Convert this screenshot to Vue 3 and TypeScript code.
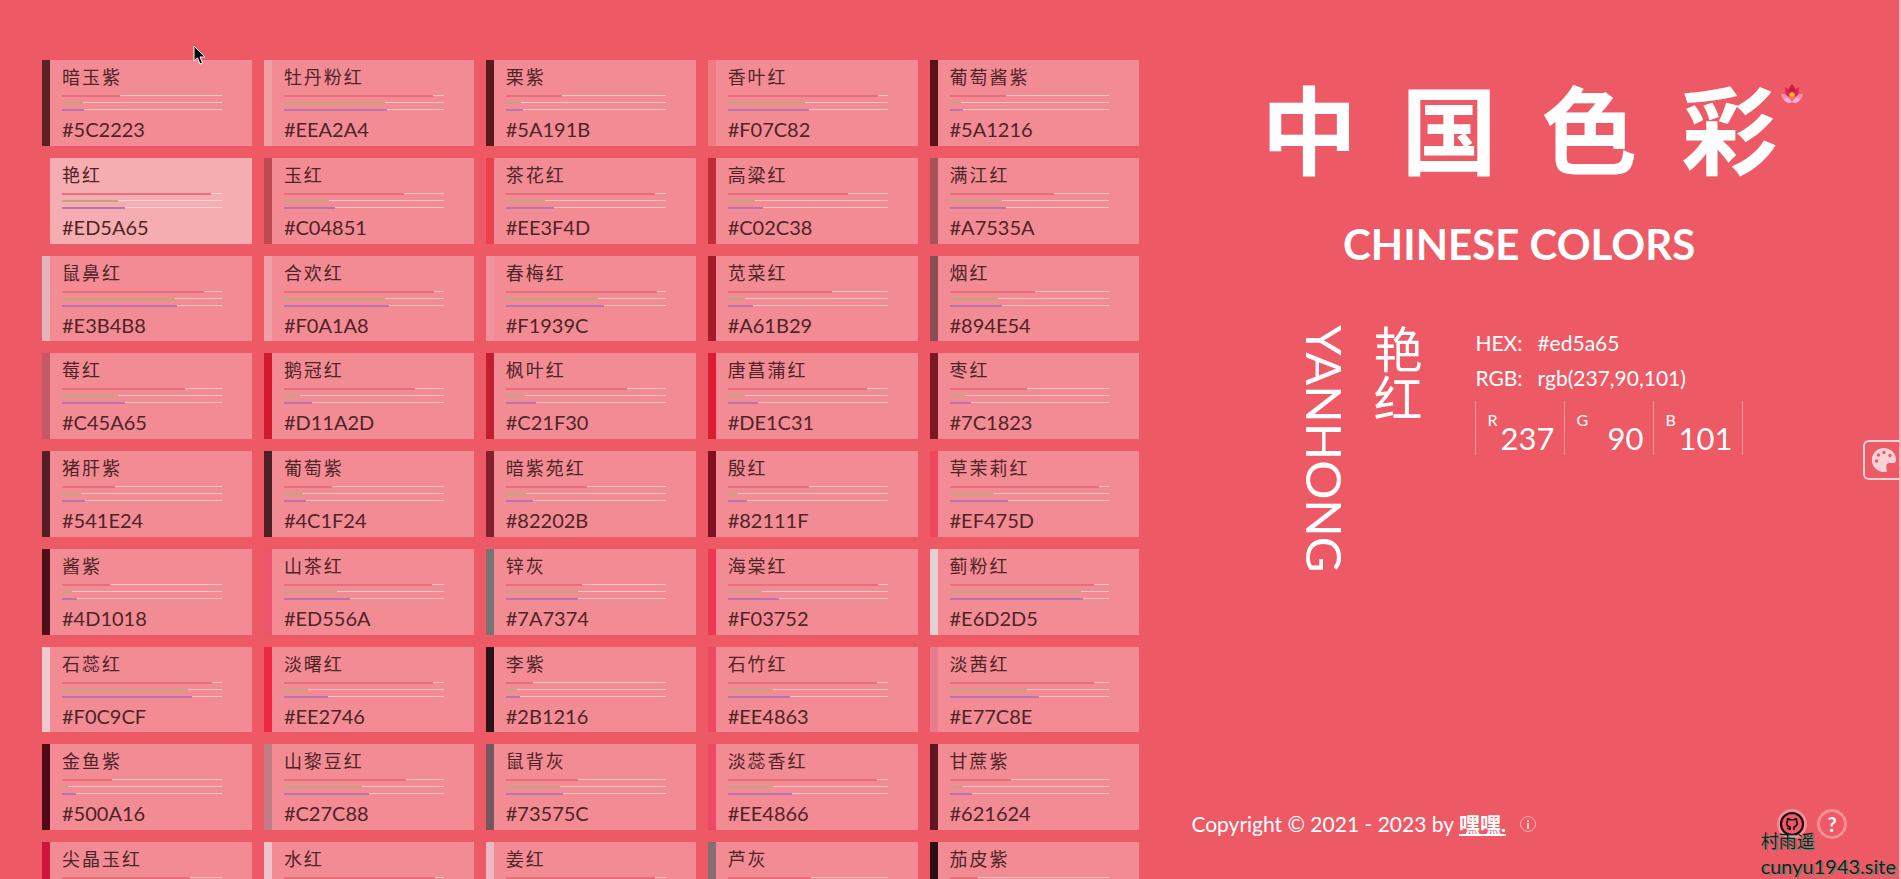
<script setup lang="ts">
interface Swatch {
  name: string
  hex: string
}

const palette = `暗玉紫 5C2223,牡丹粉红 EEA2A4,栗紫 5A191B,香叶红 F07C82,葡萄酱紫 5A1216
艳红 ED5A65,玉红 C04851,茶花红 EE3F4D,高粱红 C02C38,满江红 A7535A
鼠鼻红 E3B4B8,合欢红 F0A1A8,春梅红 F1939C,苋菜红 A61B29,烟红 894E54
莓红 C45A65,鹅冠红 D11A2D,枫叶红 C21F30,唐菖蒲红 DE1C31,枣红 7C1823
猪肝紫 541E24,葡萄紫 4C1F24,暗紫苑红 82202B,殷红 82111F,草茉莉红 EF475D
酱紫 4D1018,山茶红 ED556A,锌灰 7A7374,海棠红 F03752,蓟粉红 E6D2D5
石蕊红 F0C9CF,淡曙红 EE2746,李紫 2B1216,石竹红 EE4863,淡茜红 E77C8E
金鱼紫 500A16,山黎豆红 C27C88,鼠背灰 73575C,淡蕊香红 EE4866,甘蔗紫 621624
尖晶玉红 CC163A,水红 F1C4CD,姜红 EEB8C3,芦灰 856D72,茄皮紫 2D0C13`

const swatches: Swatch[] = palette
  .split(/[,\n]/)
  .map((entry) => {
    const [name, hex] = entry.trim().split(' ')
    return { name, hex }
  })

const channels = (hex: string): number[] => [0, 2, 4].map((i) => parseInt(hex.slice(i, i + 2), 16))
const share = (value: number): string => `${(value / 255) * 100}%`

const current = { name: '艳红', pinyin: 'YANHONG', hex: '#ed5a65' }
const rgb = channels(current.hex.slice(1))
const labels = ['R', 'G', 'B']
</script>

<template>
  <div class="page">
    <main class="scroller">
      <div class="list">
        <button
          v-for="s in swatches"
          :key="s.hex"
          type="button"
          class="card"
          :class="{ active: s.name === current.name }"
          :style="{ borderLeftColor: '#' + s.hex }"
        >
          <span class="name">{{ s.name }}</span>
          <span class="bars">
            <span v-for="(v, i) in channels(s.hex)" :key="i" class="track">
              <span class="fill" :class="labels[i]" :style="{ width: share(v) }"></span>
            </span>
          </span>
          <span class="hex">#{{ s.hex }}</span>
        </button>
      </div>
    </main>

    <aside class="side">
      <h1 class="title">
        <span v-for="c in '中国色彩'" :key="c">{{ c }}</span>
        <svg class="lotus" viewBox="0 0 22 20" aria-hidden="true">
          <path d="M0 10c5-1 9 3 11 8C5 20 1 16 0 10z" fill="#f48bb0" />
          <path d="M22 10c-5-1-9 3-11 8 6 2 10-2 11-8z" fill="#f48bb0" />
          <path d="M3 15c3-2 6-1 8 3-3 2-6 1-8-3zM19 15c-3-2-6-1-8 3 3 2 6 1 8-3z" fill="#f9b0c8" />
          <path d="M4 3l5 3 2 8-5-2C4 9 4 6 4 3zM18 3l-5 3-2 8 5-2c2-3 2-6 2-9z" fill="#e0245c" />
          <path d="M11 0c3 3 4 7 2 11H9C7 7 8 3 11 0z" fill="#c41c3c" />
          <path d="M11 7l3 3-1 4h-4l-1-4z" fill="#f4702b" />
          <circle cx="11" cy="11" r="2.500" fill="#fdb03a" />
        </svg>
      </h1>
      <h2 class="subtitle">CHINESE COLORS</h2>
      <section class="detail">
        <p class="pinyin">{{ current.pinyin }}</p>
        <p class="hanzi">{{ current.name }}</p>
        <div class="values">
          <p class="line"><span>HEX:</span><span>{{ current.hex }}</span></p>
          <p class="line"><span>RGB:</span><span>rgb({{ rgb.join(',') }})</span></p>
          <div class="channels">
            <div v-for="(v, i) in rgb" :key="i" class="channel">
              <span class="label">{{ labels[i] }}</span>
              <span class="number">{{ v }}</span>
            </div>
          </div>
        </div>
      </section>
      <footer class="footer">
        <span>Copyright © 2021 - 2023 by <a href="#">嘿嘿.</a></span>
        <svg class="info" viewBox="0 0 16 16" aria-hidden="true">
          <circle cx="8" cy="8" r="7.500" fill="none" stroke="#fff" stroke-opacity=".5" />
          <path d="M8 4v2M8 7v6" stroke="#fff" stroke-width="1.400" />
        </svg>
        <span class="actions">
          <a href="#" aria-label="GitHub">
            <svg viewBox="0 0 30 30">
              <circle cx="15" cy="15" r="13.500" fill="none" stroke="#f48d95" stroke-width="3" />
              <circle cx="15" cy="15" r="11" fill="none" stroke="#120609" stroke-width="2" />
              <path d="M10 19l2 1M13 21v-3c-2-.5-3.200-1.600-3.200-3.700 0-1 .3-1.700.8-2.300-.2-.8-.1-1.600.1-2.200 1 .1 1.600.4 2.300.9h4c.7-.5 1.300-.8 2.300-.9.200.6.300 1.400.100 2.200.5.6.8 1.300.8 2.300 0 2.100-1.200 3.200-3.200 3.700v3" fill="none" stroke="#120609" stroke-width="1.600" />
            </svg>
          </a>
          <button type="button" aria-label="Help" class="help">?</button>
        </span>
      </footer>
    </aside>

    <button type="button" class="palette" aria-label="Palette">
      <svg viewBox="0 0 24 24">
        <path d="M12 0a12 12 0 1 0 2.500 23.700c1-.3-.5-3-.2-5.700.2-2 1.200-3 3-3H22c1.500 0 2-1.500 2-3A12 12 0 0 0 12 0z" fill="#fbd3d7" />
        <g fill="#ed5a65"><circle cx="4.500" cy="13" r="1.700" /><circle cx="6.500" cy="7" r="1.700" /><circle cx="12" cy="4.500" r="1.700" /><circle cx="18" cy="7.500" r="1.700" /></g>
      </svg>
    </button>

    <p class="mark"><span class="author">村雨遥</span><span>cunyu1943.site</span></p>

    <svg class="cursor" viewBox="0 0 13 20" aria-hidden="true">
      <path d="M1 1v15l3.500-3 2.500 6 2.500-1-2.500-6H12z" fill="#000" stroke="#fff" />
    </svg>
  </div>
</template>

<style>
body {
  margin: 0;
  background: #ed5a65;
}
</style>

<style scoped>
.page {
  position: relative;
  box-sizing: border-box;
  display: flex;
  height: 100vh;
  overflow: hidden;
  border-right: 2px solid #f3b9bd;
  background: #ed5a65;
  color: #fff;
  font-family: Lato, "Noto Sans CJK SC", sans-serif;
}
p, h1, h2 {
  margin: 0;
}
button {
  font: inherit;
  color: inherit;
  background: none;
  border: 0;
  padding: 0;
}
.scroller {
  width: 60%;
  overflow-y: auto;
  scrollbar-width: none;
}
.list {
  box-sizing: border-box;
  min-height: calc(100vh + 49px);
  padding: 60px 0 0 42px;
  display: grid;
  grid-template-columns: repeat(5, 1fr);
  grid-auto-rows: 1fr;
  gap: 12px;
}
.card {
  display: flex;
  flex-direction: column;
  align-items: flex-start;
  border-left: 8px solid;
  background: rgba(255, 255, 255, 0.3);
  background-clip: padding-box;
  padding: 4px 30px 0 12px;
  color: #4f2427;
  text-align: left;
}
.card.active {
  background-color: rgba(255, 255, 255, 0.5);
}
.name {
  font-size: 18px;
  line-height: 26px;
  letter-spacing: 2px;
}
.bars {
  display: flex;
  flex-direction: column;
  gap: 6px;
  width: 100%;
  padding-top: 5px;
}
.track {
  height: 1px;
  background: rgba(255, 255, 255, 0.5);
}
.fill {
  display: block;
  height: 2px;
}
.R {
  background: #e66f7a;
}
.G {
  background: #bfa67c;
}
.B {
  background: #b973b0;
}
.hex {
  margin-top: 6px;
  font-size: 20px;
  line-height: 26px;
}
.side {
  box-sizing: border-box;
  flex: 1;
  display: flex;
  flex-direction: column;
  align-items: center;
  padding: 60px 52px 36px;
}
.title {
  position: relative;
  display: flex;
  gap: 44px;
  font-size: 96px;
  line-height: 140px;
  font-weight: 700;
}
.lotus {
  position: absolute;
  top: 24px;
  right: -26px;
  width: 22px;
  height: 20px;
}
.subtitle {
  margin-top: 19px;
  font-size: 42px;
  line-height: 50px;
  font-weight: 700;
}
.detail {
  align-self: stretch;
  display: flex;
  align-items: flex-start;
  padding: 56px 0 0 104px;
}
.pinyin {
  writing-mode: vertical-rl;
  font-size: 49px;
  line-height: 60px;
}
.hanzi {
  writing-mode: vertical-rl;
  margin-left: 10px;
  font-size: 49px;
  line-height: 60px;
}
.values {
  margin-left: 50px;
  font-size: 21px;
}
.line {
  display: flex;
  gap: 15px;
  line-height: 35px;
}
.channels {
  display: flex;
  width: max-content;
  margin-top: 6px;
  border-left: 1px solid #f4969d;
}
.channel {
  box-sizing: border-box;
  display: flex;
  justify-content: space-between;
  width: 89px;
  height: 54px;
  padding: 8px 10px 0 11px;
  border-right: 1px solid #f4969d;
}
.label {
  font-size: 16px;
  line-height: 22px;
}
.number {
  font-size: 31px;
  line-height: 58px;
}
.footer {
  align-self: stretch;
  margin-top: auto;
  display: flex;
  align-items: center;
  font-size: 21px;
  line-height: 38px;
}
.footer a {
  color: inherit;
  font-weight: 700;
}
.info {
  width: 16px;
  height: 16px;
  margin-left: 14px;
}
.actions {
  margin-left: auto;
  display: flex;
  gap: 10px;
}
.actions a, .actions svg {
  display: block;
  width: 30px;
  height: 30px;
}
.help {
  box-sizing: border-box;
  width: 30px;
  height: 30px;
  border: 3px solid #f48d95;
  border-radius: 50%;
  font-size: 20px;
  font-weight: 700;
  line-height: 24px;
}
.palette {
  position: absolute;
  top: 440px;
  right: 0;
  box-sizing: border-box;
  width: 36px;
  height: 40px;
  padding-left: 7px;
  border: 2px solid #fbd3d7;
  border-right: 0;
  border-radius: 6px 0 0 6px;
}
.palette svg {
  display: block;
  width: 24px;
  height: 24px;
}
.mark {
  position: absolute;
  right: 3px;
  bottom: 0;
  display: flex;
  flex-direction: column;
  font-size: 20px;
  line-height: 25px;
  color: #241a1b;
  text-shadow: 1px 1px 0 #4b9c7d;
}
.author {
  font-size: 18px;
}
.cursor {
  position: absolute;
  left: 193px;
  top: 45px;
  width: 13px;
  height: 20px;
}
</style>
